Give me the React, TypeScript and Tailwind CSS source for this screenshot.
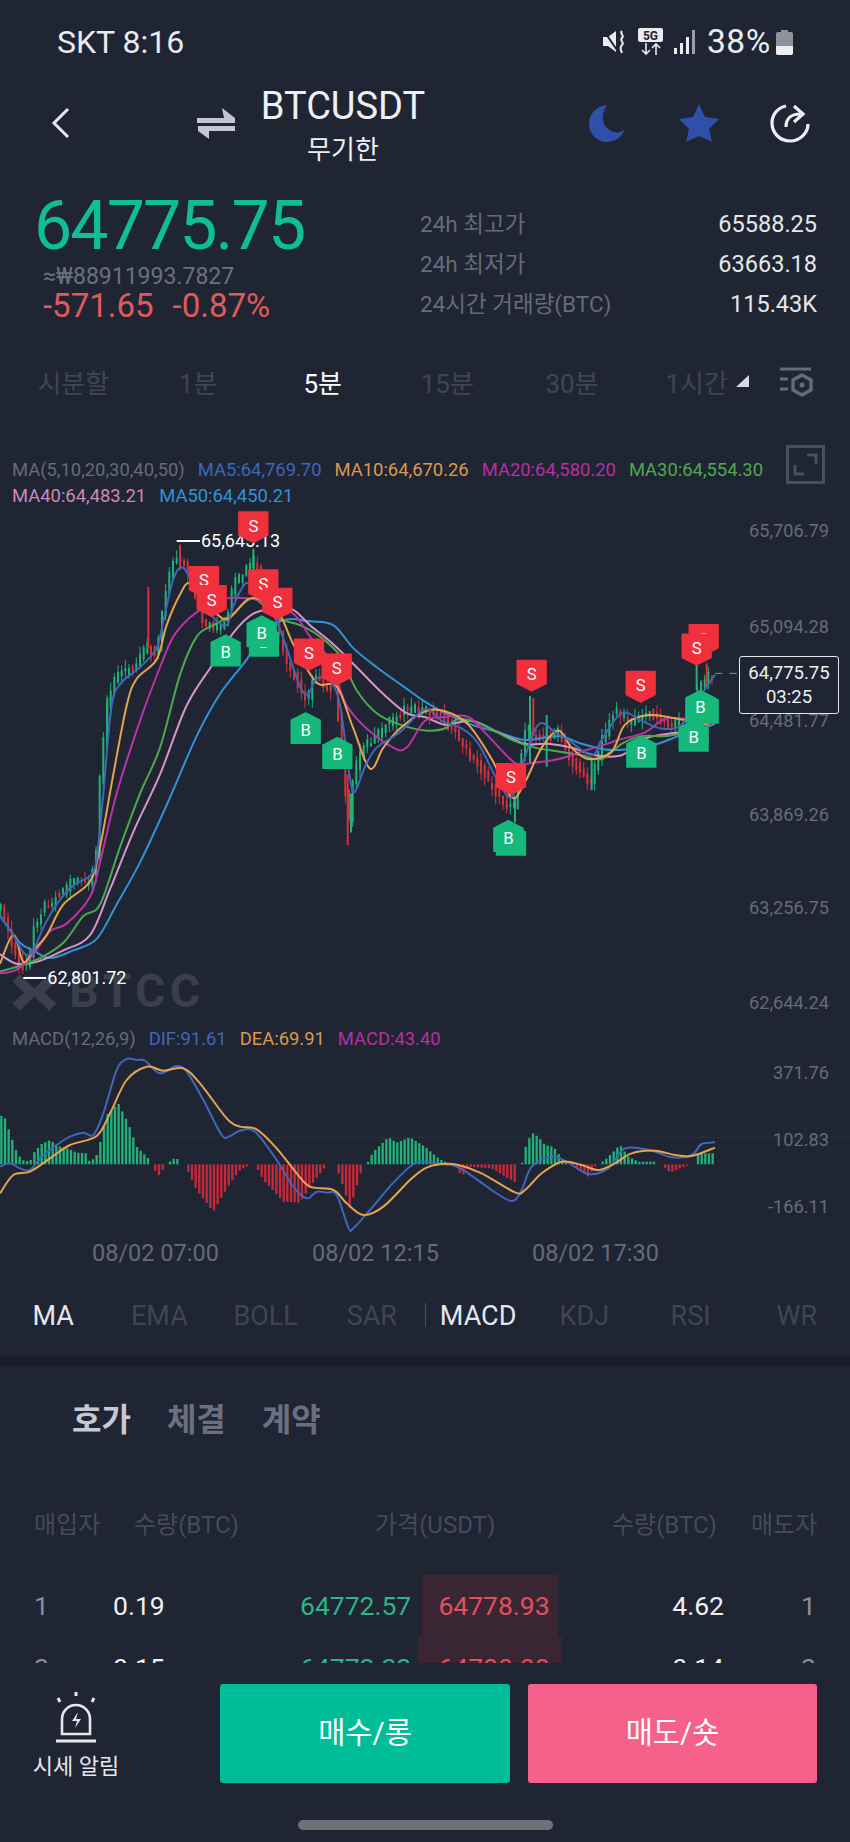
import type { ReactNode } from "react";

type Pt = [number, number];

// chart coordinates are 3x the page pixels; points were read off a crop whose y scale is 1568/600
const sy = (y: number) => (y * 1800) / 1568;
const scaleY = (pts: Pt[]): Pt[] => pts.map(([x, y]) => [x, sy(y)] as Pt);
const shift = (pts: Pt[]): Pt[] => pts.map(([x, y]) => [x + 1275, y] as Pt);

const smooth = (pts: Pt[]) => {
  let d = `M${pts[0][0]} ${pts[0][1]}`;
  for (let i = 0; i < pts.length - 1; i++) {
    const p0 = pts[Math.max(0, i - 1)];
    const p1 = pts[i];
    const p2 = pts[i + 1];
    const p3 = pts[Math.min(pts.length - 1, i + 2)];
    const c1x = p1[0] + (p2[0] - p0[0]) / 6;
    const c1y = p1[1] + (p2[1] - p0[1]) / 6;
    const c2x = p2[0] - (p3[0] - p1[0]) / 6;
    const c2y = p2[1] - (p3[1] - p1[1]) / 6;
    d += ` C${c1x} ${c1y} ${c2x} ${c2y} ${p2[0]} ${p2[1]}`;
  }
  return d;
};

const interp = (pts: Pt[], x: number) => {
  if (x <= pts[0][0]) return pts[0][1];
  for (let i = 0; i < pts.length - 1; i++) {
    if (x <= pts[i + 1][0]) {
      const t = (x - pts[i][0]) / (pts[i + 1][0] - pts[i][0] || 1);
      return pts[i][1] + (pts[i + 1][1] - pts[i][1]) * t;
    }
  }
  return pts[pts.length - 1][1];
};

const rnd = (i: number) => {
  const v = Math.sin(i * 12.9898) * 43758.5453;
  return v - Math.floor(v);
};

const pricePath: Pt[] = scaleY([
  [5, 1250], [30, 1330], [60, 1400], [85, 1400], [100, 1300], [130, 1250], [170, 1220], [220, 1170], [270, 1190],
  [290, 1090], [300, 900], [320, 720], [345, 640], [400, 620], [440, 560], [470, 590], [490, 450], [520, 340],
  [545, 340], [570, 390], [610, 500], [640, 520], [675, 510], [700, 400], [730, 380], [760, 340], [790, 400],
  [830, 500], [860, 610], [900, 680], [920, 710], [945, 640], [975, 670], [1005, 670], [1030, 900], [1045, 1030],
  [1060, 900], [1090, 830], [1130, 800], [1170, 760], [1220, 730],
  ...shift([
    [0, 730], [40, 740], [90, 790], [120, 830], [170, 890], [220, 960], [265, 990], [300, 780], [330, 800],
    [370, 800], [400, 790], [430, 850], [470, 900], [500, 920], [530, 810], [570, 730], [610, 760], [680, 740],
    [730, 770], [780, 760], [820, 680], [850, 640], [875, 640],
  ]),
]);

const ma5: Pt[] = [
  [0, 1270], [40, 1320], [75, 1370], [100, 1360], [130, 1300], [170, 1240], [220, 1190], [270, 1165], [290, 1120],
  [310, 950], [335, 720], [365, 660], [420, 620], [470, 570], [490, 500], [520, 390], [550, 360], [590, 420],
  [640, 490], [680, 510], [700, 460], [740, 400], [790, 440], [830, 500], [860, 570], [900, 670], [925, 690],
  [950, 650], [990, 655], [1020, 720], [1050, 910], [1065, 945], [1095, 880], [1130, 830], [1200, 790],
  ...shift([
    [0, 730], [50, 760], [110, 780], [160, 820], [220, 920], [260, 960], [290, 880], [340, 770], [390, 790],
    [430, 810], [500, 850], [530, 810], [590, 740], [650, 760], [710, 780], [770, 770], [830, 690], [870, 640],
  ]),
];
const ma10: Pt[] = [
  [0, 1395], [40, 1320], [70, 1390], [100, 1360], [140, 1320], [190, 1240], [270, 1180], [300, 1090], [340, 900],
  [380, 720], [410, 650], [470, 600], [500, 510], [540, 430], [570, 400], [620, 450], [680, 495], [750, 440],
  [830, 470], [880, 560], [950, 660], [1010, 670], [1060, 780], [1110, 885], [1150, 830], [1200, 780],
  ...shift([
    [0, 735], [60, 735], [130, 770], [200, 860], [260, 960], [300, 920], [350, 830], [400, 785], [440, 830],
    [490, 860], [560, 840], [600, 770], [670, 745], [760, 755], [850, 770],
  ]),
];
const ma20: Pt[] = [
  [0, 1420], [50, 1410], [100, 1370], [150, 1310], [200, 1290], [270, 1220], [300, 1130], [350, 950], [420, 760],
  [480, 620], [520, 540], [570, 490], [620, 460], [680, 440], [740, 440], [800, 450], [880, 480], [930, 540],
  [980, 590], [1010, 650], [1040, 720], [1100, 780], [1180, 830], [1220, 830],
  ...shift([
    [0, 760], [60, 750], [130, 750], [190, 800], [270, 870], [320, 870], [400, 860], [470, 840], [510, 830],
    [580, 810], [660, 790], [720, 755], [780, 755], [860, 770],
  ]),
];
const ma30: Pt[] = [
  [0, 1415], [60, 1400], [120, 1380], [190, 1340], [250, 1270], [300, 1240], [360, 1090], [420, 950], [480, 830],
  [540, 640], [590, 540], [640, 510], [700, 480], [760, 440], [830, 490], [900, 510], [960, 540], [1020, 590],
  [1070, 680], [1130, 740], [1200, 770],
  ...shift([
    [0, 785], [60, 780], [100, 755], [170, 770], [260, 810], [330, 830], [400, 840], [470, 850], [530, 860],
    [590, 820], [650, 800], [720, 800], [790, 790],
  ]),
];
const ma40: Pt[] = [
  [0, 1370], [50, 1395], [110, 1390], [190, 1360], [270, 1320], [330, 1200], [400, 1050], [480, 900], [560, 720],
  [640, 610], [700, 530], [760, 480], [830, 465], [880, 470], [930, 510], [1000, 560], [1070, 620], [1150, 690],
  [1220, 740],
  ...shift([
    [0, 750], [60, 770], [140, 760], [220, 790], [300, 820], [370, 820], [440, 830], [510, 850], [590, 850],
    [650, 810], [720, 795], [780, 790],
  ]),
];
const ma50: Pt[] = [
  [0, 1270], [60, 1340], [100, 1360], [150, 1380], [220, 1360], [290, 1330], [350, 1240], [420, 1130], [500, 980],
  [590, 800], [660, 690], [740, 600], [800, 520], [860, 495], [930, 500], [1000, 510], [1060, 570], [1130, 620],
  [1210, 670],
  ...shift([
    [0, 710], [60, 740], [140, 770], [220, 790], [300, 810], [400, 800], [470, 820], [540, 835], [600, 835],
    [680, 825], [760, 800], [830, 780], [870, 768],
  ]),
];

const lines: { pts: Pt[]; color: string }[] = [
  { pts: scaleY(ma50), color: "#2f93d6" },
  { pts: scaleY(ma40), color: "#d795c9" },
  { pts: scaleY(ma30), color: "#4fa850" },
  { pts: scaleY(ma20), color: "#bd32a6" },
  { pts: scaleY(ma10), color: "#e6a450" },
  { pts: scaleY(ma5), color: "#3f66b8" },
];

const spikes: [number, number, number, string][] = [
  [445, 410, 570, "#d8303c"],
  [1043, 900, 1085, "#d8303c"],
  [1053, 950, 1052, "#1fb37a"],
  [322, 700, 770, "#1fb37a"],
  [760, 310, 400, "#1fb37a"],
  [540, 300, 365, "#d8303c"],
  [1275 + 315, 695, 870, "#1fb37a"],
  [1275 + 325, 700, 800, "#d8303c"],
  [1275 + 270, 960, 1025, "#1fb37a"],
  [1275 + 500, 860, 940, "#1fb37a"],
  [1275 + 365, 745, 880, "#1fb37a"],
  [1275 + 845, 610, 672, "#d8303c"],
  [1275 + 815, 610, 680, "#1fb37a"],
];

const sellMarks: Pt[] = scaleY([
  [760, 250], [612, 393], [635, 443], [790, 402], [832, 450], [927, 583], [1010, 622],
  [1275 + 320, 638], [1275 + 647, 667], [1275 + 258, 908], [1275 + 836, 545], [1275 + 815, 570],
]);
const buyMarks: Pt[] = scaleY([
  [792, 555], [785, 530], [677, 580], [917, 783], [1012, 848],
  [1275 + 258, 1075], [1275 + 250, 1065], [1275 + 649, 845], [1275 + 836, 730], [1275 + 826, 725], [1275 + 806, 803],
]);

const histogram: Pt[] = [
  [0, 285], [15, 295], [30, 340], [50, 395], [65, 420], [90, 425], [100, 400], [125, 372], [150, 360], [175, 378],
  [210, 388], [230, 398], [260, 400], [270, 428], [290, 405], [300, 370], [320, 285], [355, 250], [385, 310],
  [410, 380], [445, 415], [452, 433], [455, 433], [475, 468], [500, 433], [515, 420], [528, 412], [545, 433],
  [555, 433], [590, 510], [640, 575], [690, 490], [720, 450], [750, 435], [765, 433], [790, 480], [850, 545],
  [900, 548], [930, 500], [980, 435], [1005, 433], [1020, 470], [1050, 565], [1090, 433], [1100, 433], [1120, 395],
  [1165, 352], [1190, 368], [1230, 352],
  ...shift([
    [0, 380], [40, 415], [70, 430], [90, 433], [110, 470], [130, 440], [200, 445], [275, 490], [278, 433], [290, 433],
    [300, 385], [320, 338], [340, 350], [360, 375], [385, 380], [410, 415], [430, 433], [440, 433], [490, 470],
    [515, 433], [520, 433], [540, 420], [585, 375], [610, 410], [640, 425], [690, 425], [695, 433], [710, 433],
    [735, 458], [795, 433], [810, 433], [815, 400], [870, 400],
  ]),
];

const dif: Pt[] = [
  [0, 440], [30, 430], [60, 445], [90, 450], [125, 410], [170, 375], [210, 350], [250, 338], [280, 345], [310, 280],
  [350, 150], [380, 117], [410, 120], [435, 122], [480, 160], [530, 138], [560, 155], [610, 240], [665, 345],
  [690, 348], [720, 332], [765, 335], [830, 420], [880, 500], [920, 535], [950, 515], [980, 518], [1010, 525],
  [1045, 622], [1060, 625], [1110, 570], [1180, 488], [1240, 432],
  ...shift([
    [0, 425], [50, 432], [90, 438], [130, 460], [200, 510], [260, 543], [290, 510], [320, 440], [380, 410], [430, 428],
    [490, 462], [550, 445], [600, 385], [680, 392], [740, 412], [800, 405], [830, 372], [870, 367],
  ]),
];
const dea: Pt[] = [
  [0, 520], [40, 465], [90, 455], [150, 415], [210, 375], [290, 348], [330, 280], [380, 180], [440, 140], [490, 152],
  [550, 145], [600, 190], [680, 295], [720, 320], [770, 328], [830, 385], [890, 460], [930, 500], [1000, 510],
  [1040, 550], [1090, 585], [1150, 560], [1230, 480],
  ...shift([
    [0, 445], [50, 432], [100, 435], [170, 460], [270, 517], [300, 510], [350, 460], [410, 425], [470, 435], [520, 450],
    [570, 430], [620, 400], [690, 392], [750, 405], [800, 408], [870, 383],
  ]),
];

const gridX = [516, 1020, 1536, 2055];
const barIndexes = Array.from({ length: 195 }, (_, i) => i);

function Marker({ at, kind }: { at: Pt; kind: "S" | "B" }) {
  const [x, y] = at;
  const points =
    kind === "S"
      ? `${x - 43},${y - 41} ${x + 43},${y - 41} ${x + 43},${y + 28} ${x},${y + 50} ${x - 43},${y + 28}`
      : `${x - 43},${y + 41} ${x + 43},${y + 41} ${x + 43},${y - 28} ${x},${y - 50} ${x - 43},${y - 28}`;
  return (
    <g>
      <polygon
        points={points}
        fill={kind === "S" ? "#f0303c" : "#14b97b"}
        stroke={kind === "S" ? "#f0303c" : "#14b97b"}
        strokeWidth="5"
        strokeLinejoin="round"
      />
      <text x={x} y={y + 18} textAnchor="middle" fontSize="50" fill="#ffffff" fontFamily="Roboto, sans-serif">
        {kind}
      </text>
    </g>
  );
}

function PriceChart() {
  return (
    <svg width="850" height="600" viewBox="0 0 2550 1800" className="absolute left-0 top-[7px]">
      {[430, 785, 1140, 1495].map((y) => (
        <line key={y} x1="0" x2="2550" y1={sy(y)} y2={sy(y)} stroke="#272d3b" strokeWidth="3" />
      ))}
      {gridX.map((x) => (
        <line key={x} x1={x} x2={x} y1="0" y2="1800" stroke="#232937" strokeWidth="3" />
      ))}

      {/* watermark */}
      <g fill="none" stroke="#3a3f4b" strokeWidth="30">
        <path d={`M48 ${sy(1432)} L94 ${sy(1470)} L48 ${sy(1508)}`} />
        <path d={`M158 ${sy(1432)} L112 ${sy(1470)} L158 ${sy(1508)}`} />
      </g>
      <text x="208" y={sy(1508)} fontSize="138" fontWeight="700" letterSpacing="14" fill="#3a3f4b" fontFamily="Roboto, sans-serif">
        BTCC
      </text>

      {barIndexes.map((i) => {
        const x = 2 + i * 11;
        const close = interp(pricePath, x) + (rnd(i) - 0.5) * 18;
        const open = interp(pricePath, x - 11) + (rnd(i + 300) - 0.5) * 18;
        const top = Math.min(open, close) - rnd(i + 50) * 12;
        const bottom = Math.max(open, close) + rnd(i + 90) * 12;
        const color = close > open ? "#d8303c" : "#1fb37a";
        return (
          <g key={i}>
            <line x1={x} x2={x} y1={top - rnd(i + 7) * 26} y2={bottom + rnd(i + 11) * 26} stroke={color} strokeWidth="3" />
            <line x1={x} x2={x} y1={top} y2={bottom} stroke={color} strokeWidth="6" />
          </g>
        );
      })}
      {spikes.map(([x, y1, y2, color]) => (
        <line key={`${x}-${y1}`} x1={x} x2={x} y1={sy(y1)} y2={sy(y2)} stroke={color} strokeWidth="6" />
      ))}

      {lines.map((l) => (
        <path key={l.color} d={smooth(l.pts)} fill="none" stroke={l.color} strokeWidth="6" />
      ))}

      <line x1="2145" x2="2210" y1={sy(636)} y2={sy(636)} stroke="#8b909c" strokeWidth="3" strokeDasharray="22 22" />

      <line x1="530" x2="600" y1={sy(290)} y2={sy(290)} stroke="#ffffff" strokeWidth="6" />
      <text x="603" y={sy(290) + 19} fontSize="54" fill="#ffffff" fontFamily="Roboto, sans-serif">65,645.13</text>
      <line x1="70" x2="138" y1={sy(1432)} y2={sy(1432)} stroke="#ffffff" strokeWidth="6" />
      <text x="142" y={sy(1432) + 19} fontSize="54" fill="#ffffff" fontFamily="Roboto, sans-serif">62,801.72</text>

      {buyMarks.map((m) => <Marker key={`b${m[0]}`} at={m} kind="B" />)}
      {sellMarks.map((m) => <Marker key={`s${m[0]}`} at={m} kind="S" />)}
    </svg>
  );
}

function MacdChart() {
  return (
    <svg width="850" height="250" viewBox="0 0 2550 750" className="absolute left-0 top-[597px]">
      <line x1="0" x2="2550" y1="352" y2="352" stroke="#2a303e" strokeWidth="3" />
      {gridX.map((x) => (
        <line key={x} x1={x} x2={x} y1="0" y2="750" stroke="#232937" strokeWidth="3" />
      ))}
      {barIndexes.map((i) => {
        const x = 4 + i * 11;
        const y = interp(histogram, x);
        if (Math.abs(y - 433) < 3) return null;
        return (
          <line key={i} x1={x} x2={x} y1="433" y2={y} stroke={y < 433 ? "#1fb37a" : "#c9283a"} strokeWidth="7" />
        );
      })}
      <path d={smooth(dif)} fill="none" stroke="#3f66b8" strokeWidth="6" />
      <path d={smooth(dea)} fill="none" stroke="#e6a450" strokeWidth="6" />
    </svg>
  );
}

function AxisLabel({ className, children }: { className: string; children: ReactNode }) {
  return <span className={`absolute right-[21px] text-[18.2px] leading-none text-[#666b78] ${className}`}>{children}</span>;
}

function StatusBar() {
  return (
    <div className="flex h-[84px] items-center pl-[57px] text-[32px] text-[#e9ebef]">
      <span className="w-[546px]">SKT 8:16</span>
      <svg width="23" height="24" viewBox="0 0 23 24" fill="none">
        <path d="M0 7h5l8-6v21L5 16H0z" fill="#e9ebef" />
        <path d="M1 1l15 22" stroke="#1f2533" strokeWidth="2" />
        <path d="M19 1c-3 3 3 4 0 7s3 4 0 7-1 5 0 8" stroke="#e9ebef" strokeWidth="2" />
      </svg>
      <svg width="26" height="28" viewBox="0 0 26 28" className="ml-[12px]">
        <rect x="0" y="0" width="25" height="14" rx="2" fill="#e9ebef" />
        <text x="12.5" y="11.5" textAnchor="middle" fontSize="12" fontWeight="700" fill="#1f2533" fontFamily="Roboto, sans-serif">5G</text>
        <path d="M8 15v11M4 22l4 4 4-4M18 27V16M14 20l4-4 4 4" stroke="#e9ebef" strokeWidth="1.6" fill="none" />
      </svg>
      <svg width="22" height="24" viewBox="0 0 22 24" className="ml-[10px]">
        <rect x="0" y="18" width="3" height="6" fill="#e9ebef" />
        <rect x="6" y="13" width="3" height="11" fill="#e9ebef" />
        <rect x="12" y="7" width="3" height="17" fill="#e9ebef" />
        <rect x="18" y="0" width="3" height="24" fill="#9a9ea8" />
      </svg>
      <span className="ml-[11px] text-[33.5px] tracking-[0.5px]">38%</span>
      <svg width="17" height="25" viewBox="0 0 17 25" className="ml-[5px]">
        <path d="M5 0h7v2h3a2 2 0 0 1 2 2v19a2 2 0 0 1-2 2H2a2 2 0 0 1-2-2V4a2 2 0 0 1 2-2h3z" fill="#8e929c" />
        <path d="M0 16h17v7a2 2 0 0 1-2 2H2a2 2 0 0 1-2-2z" fill="#eceef1" />
      </svg>
    </div>
  );
}

function Header() {
  return (
    <div className="flex h-[78px] items-center">
      <svg width="20" height="32" viewBox="0 0 20 32" fill="none" className="ml-[51px]">
        <path d="M17 2L3 16l14 14" stroke="#e5e7eb" strokeWidth="3" />
      </svg>
      <svg width="38" height="32" viewBox="0 0 38 32" className="ml-[126px]">
        <path d="M0 11h38v5H0z" fill="#c3c7d2" />
        <path d="M25 1l13 10H27z" fill="#c3c7d2" />
        <path d="M1 19h37v5H1z" fill="#c3c7d2" />
        <path d="M12 32L1 24h11z" fill="#c3c7d2" />
      </svg>
      <div className="ml-[13px] flex w-[190px] flex-col items-center pt-[4px] text-[#eef0f3]">
        <span className="text-[38px] leading-[44px]">BTCUSDT</span>
        <span className="mt-[6px] text-[26px] leading-[32px]">무기한</span>
      </div>
      <svg width="36" height="38" viewBox="0 0 36 38" className="ml-[151px]">
        <path d="M18 1C8 2 0 9 0 20c0 10 8 18 18 18 8 0 15-5 18-13-3 3-7 4-11 3-7-2-12-8-11-16 0-4 2-8 4-11z" fill="#2f4fa8" />
      </svg>
      <svg width="40" height="38" viewBox="0 0 40 38" className="ml-[54px]">
        <path d="M20 0l6 13 14 2-10 10 3 13-13-6-13 6 3-13L0 15l14-2z" fill="#2f4fa8" />
      </svg>
      <svg width="40" height="40" viewBox="0 0 40 40" fill="none" className="ml-[51px]">
        <path d="M16 3C7 5 2 12 2 20c0 10 8 18 18 18s18-8 18-17" stroke="#eef0f3" strokeWidth="3.2" />
        <path d="M16 24c0-8 5-13 14-13M24 3l9 8-9 8" stroke="#eef0f3" strokeWidth="3.2" />
      </svg>
    </div>
  );
}

function PriceBlock() {
  const stats = [
    ["24h 최고가", "65588.25"],
    ["24h 최저가", "63663.18"],
    ["24시간 거래량(BTC)", "115.43K"],
  ];
  return (
    <div className="flex h-[179px] border-b border-[#252b39]">
      <div className="ml-[34px] w-[386px] pt-[26px]">
        <div className="text-[68px] leading-[76px] tracking-[-1.9px] text-[#0fbd97]">64775.75</div>
        <div className="ml-[9px] text-[23px] leading-[26px] text-[#6b7080]">≈₩88911993.7827</div>
        <div className="ml-[9px] flex gap-[19px] text-[33px] leading-[32px] text-[#e05a5a]">
          <span>-571.65</span>
          <span>-0.87%</span>
        </div>
      </div>
      <div className="flex w-[397px] flex-col pt-[43px]">
        {stats.map(([label, value]) => (
          <div key={label} className="flex h-[40px] items-center justify-between text-[22.5px]">
            <span className="text-[#666b78]">{label}</span>
            <span className="text-[23.5px] text-[#e5e7eb]">{value}</span>
          </div>
        ))}
      </div>
    </div>
  );
}

function PeriodTabs() {
  const tabs = ["시분할", "1분", "5분", "15분", "30분", "1시간"];
  return (
    <div className="flex h-[82px] items-center border-b border-[#252b39]">
      <div className="ml-[11px] grid w-[748px] grid-cols-6 pt-[6px] text-center text-[26px] text-[#3f4554]">
        {tabs.map((t) => (
          <span key={t} className={`flex items-center justify-center ${t === "5분" ? "text-white" : ""}`}>
            {t}
            {t === "1시간" && (
              <svg width="14" height="12" viewBox="0 0 14 12" className="absolute ml-[92px] mt-[-8px]">
                <path d="M13 0v12H0z" fill="#d6d9df" />
              </svg>
            )}
          </span>
        ))}
      </div>
      <svg width="34" height="30" viewBox="0 0 34 30" fill="none" className="ml-[20px]">
        <path d="M1 2h31" stroke="#666b78" strokeWidth="3" />
        <path d="M1 12h8M1 22h8" stroke="#666b78" strokeWidth="3" />
        <path d="M23 8l9 5v10l-9 5-9-5V13z" stroke="#666b78" strokeWidth="3.4" />
        <circle cx="23" cy="18" r="2.5" fill="#666b78" />
      </svg>
    </div>
  );
}

function Chart() {
  return (
    <div className="relative h-[847px] overflow-hidden text-[18.4px]">
      <PriceChart />
      <MacdChart />

      <div className="absolute left-[12px] top-[35px] flex h-[24px] items-center gap-[13px] whitespace-nowrap">
        <span className="text-[#666b78]">MA(5,10,20,30,40,50)</span>
        <span className="text-[#3f66b8]">MA5:64,769.70</span>
        <span className="text-[#d99a4a]">MA10:64,670.26</span>
        <span className="text-[#b530a0]">MA20:64,580.20</span>
        <span className="text-[#4fa850]">MA30:64,554.30</span>
      </div>
      <div className="absolute left-[12px] top-[61px] flex h-[24px] items-center gap-[13px] whitespace-nowrap">
        <span className="text-[#c98abb]">MA40:64,483.21</span>
        <span className="text-[#2f93d6]">MA50:64,450.21</span>
      </div>

      <div className="absolute left-[786px] top-[22px] flex h-[39px] w-[39px] items-center justify-center border-[3px] border-[#4a4f5c]">
        <svg width="25" height="25" viewBox="0 0 25 25" fill="none">
          <path d="M14 3h9v9M2 13v9h9" stroke="#4a4f5c" strokeWidth="3" />
        </svg>
      </div>

      <AxisLabel className="top-[99px]">65,706.79</AxisLabel>
      <AxisLabel className="top-[195px]">65,094.28</AxisLabel>
      <AxisLabel className="top-[289px]">64,481.77</AxisLabel>
      <AxisLabel className="top-[383px]">63,869.26</AxisLabel>
      <AxisLabel className="top-[476px]">63,256.75</AxisLabel>
      <AxisLabel className="top-[571px]">62,644.24</AxisLabel>
      <AxisLabel className="top-[641px]">371.76</AxisLabel>
      <AxisLabel className="top-[708px]">102.83</AxisLabel>
      <AxisLabel className="top-[775px]">-166.11</AxisLabel>

      <div className="absolute left-[739px] top-[233px] flex h-[58px] w-[100px] flex-col items-center justify-center rounded-[3px] border border-[#e5e7eb] bg-[#1f2533] text-[18.5px] leading-[24px] text-[#eef0f3]">
        <span>64,775.75</span>
        <span>03:25</span>
      </div>

      <div className="absolute left-[12px] top-[604px] flex h-[24px] items-center gap-[13px] whitespace-nowrap">
        <span className="text-[#666b78]">MACD(12,26,9)</span>
        <span className="text-[#3f66b8]">DIF:91.61</span>
        <span className="text-[#d99a4a]">DEA:69.91</span>
        <span className="text-[#b530a0]">MACD:43.40</span>
      </div>

      <div className="absolute left-[92px] top-[817px] whitespace-nowrap text-[23.5px] leading-[26px] text-[#666b78]">08/02 07:00</div>
      <div className="absolute left-[312px] top-[817px] whitespace-nowrap text-[23.5px] leading-[26px] text-[#666b78]">08/02 12:15</div>
      <div className="absolute left-[532px] top-[817px] whitespace-nowrap text-[23.5px] leading-[26px] text-[#666b78]">08/02 17:30</div>
    </div>
  );
}

function IndicatorTabs() {
  const tabs = ["MA", "EMA", "BOLL", "SAR", "MACD", "KDJ", "RSI", "WR"];
  return (
    <div className="relative grid h-[86px] grid-cols-8 items-center pt-[6px] text-center text-[27px] text-[#3f4554]">
      {tabs.map((t) => (
        <span key={t} className={t === "MA" || t === "MACD" ? "text-[#e5e7eb]" : ""}>
          {t}
        </span>
      ))}
      <div className="absolute left-[425px] top-[33px] h-[24px] w-px bg-[#4a4f5c]" />
    </div>
  );
}

function OrderRow({ values, wide }: { values: string[]; wide?: boolean }) {
  return (
    <div className="grid h-[62px] grid-cols-[79px_187px_122px_136px_166px_92px] items-center pl-[34px] text-[26.5px] text-[#eef0f3]">
      <span className="text-[#8b909c]">{values[0]}</span>
      <span>{values[1]}</span>
      <span className="text-[#2eb489]">{values[2]}</span>
      <span className="relative flex h-full items-center justify-center bg-[#392632] pl-[8px] text-[#e0505f]">
        {wide && <span className="absolute inset-y-0 -left-[4px] -right-[4px] bg-[#392632]" />}
        <span className="relative">{values[3]}</span>
      </span>
      <span className="text-right">{values[4]}</span>
      <span className="text-right text-[#8b909c]">{values[5]}</span>
    </div>
  );
}

function OrderBook() {
  return (
    <div className="h-[296px] overflow-hidden">
      <div className="flex h-[105px] items-center gap-[36px] pl-[72px] text-[32px] font-bold text-[#6b7080]">
        <span className="text-[#c5c9d3]">호가</span>
        <span>체결</span>
        <span>계약</span>
      </div>
      <div className="flex h-[103px] items-center pl-[34px] pt-[2px] text-[24px] text-[#454b5a]">
        <span className="w-[100px]">매입자</span>
        <span className="w-[241px]">수량(BTC)</span>
        <span className="w-[237px]">가격(USDT)</span>
        <span className="w-[139px]">수량(BTC)</span>
        <span>매도자</span>
      </div>
      <OrderRow values={["1", "0.19", "64772.57", "64778.93", "4.62", "1"]} />
      <OrderRow wide values={["2", "0.15", "64772.22", "64780.08", "0.14", "2"]} />
    </div>
  );
}

function BottomBar() {
  return (
    <div className="relative h-[179px] bg-[#1f2533] pt-[21px]">
      <div className="flex h-[99px]">
        <div className="ml-[34px] flex w-[84px] flex-col items-center">
          <svg width="42" height="52" viewBox="0 0 42 52" fill="none" className="mt-[8px]">
            <path d="M21 0v4M3 6l2 4M39 6l-2 4" stroke="#e5e7eb" strokeWidth="3" />
            <path d="M7 42V27a14 14 0 0 1 28 0v15z" stroke="#e5e7eb" strokeWidth="2.6" />
            <path d="M1 49h40" stroke="#e5e7eb" strokeWidth="3" />
            <path d="M23 20l-6 9h5l-2 7 6-9h-5z" fill="#e5e7eb" />
          </svg>
          <span className="mt-[9px] whitespace-nowrap text-[22px] leading-[28px] text-[#e5e7eb]">시세 알림</span>
        </div>
        <div className="ml-[102px] flex w-[290px] items-center justify-center rounded-[3px] bg-[#00bd9a] text-[29.5px] text-white">매수/롱</div>
        <div className="ml-[18px] flex w-[289px] items-center justify-center rounded-[3px] bg-[#f5618a] text-[29.5px] text-white">매도/숏</div>
      </div>
      <div className="ml-[298px] mt-[37px] h-[10px] w-[255px] rounded-full bg-[#6e7178]" />
    </div>
  );
}

export default function App() {
  return (
    <div className="h-[1842px] w-[850px] overflow-hidden bg-[#1f2533] font-['Roboto','Noto_Sans_CJK_KR',sans-serif]">
      <StatusBar />
      <Header />
      <PriceBlock />
      <PeriodTabs />
      <Chart />
      <IndicatorTabs />
      <div className="h-[11px] bg-[#1a1e29]" />
      <OrderBook />
      <BottomBar />
    </div>
  );
}
